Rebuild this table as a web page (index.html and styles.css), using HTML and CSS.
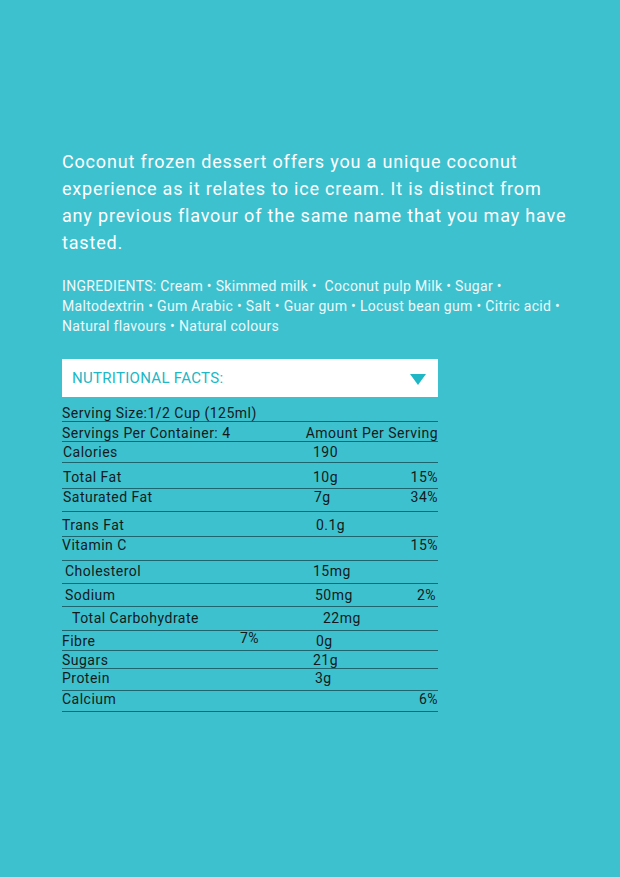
FILE: index.html
```html
<!DOCTYPE html>
<html lang="en">
<head>
<meta charset="utf-8">
<title>Coconut frozen dessert</title>
<link rel="stylesheet" href="styles.css">
</head>
<body>
<main class="page">
  <p class="intro">Coconut frozen dessert offers you a unique coconut experience as it relates to ice cream. It is distinct from any previous flavour of the same name that you may have tasted.</p>
  <p class="ingredients">INGREDIENTS: Cream • Skimmed milk • &nbsp;Coconut pulp Milk • Sugar • Maltodextrin • Gum Arabic • Salt • Guar gum • Locust bean gum • Citric acid • Natural flavours • Natural colours</p>

  <div class="facts-head">
    <span class="facts-title">NUTRITIONAL FACTS:</span>
    <svg class="facts-caret" width="16" height="11" viewBox="0 0 16 11" aria-hidden="true"><polygon points="0,0 16,0 8,11" fill="#1fb7c6"/></svg>
  </div>

  <div class="facts">
    <div class="row"><span class="lbl">Serving Size:1/2 Cup (125ml)</span></div>
    <div class="row"><span class="lbl">Servings Per Container: 4</span><span class="pct">Amount Per Serving</span></div>
    <div class="row"><span class="lbl ind1">Calories</span><span class="amt">190</span></div>
    <div class="row"><span class="lbl ind1">Total Fat</span><span class="amt">10g</span><span class="pct">15%</span></div>
    <div class="row"><span class="lbl ind1">Saturated Fat</span><span class="amt off1">7g</span><span class="pct">34%</span></div>
    <div class="row"><span class="lbl">Trans Fat</span><span class="amt off3">0.1g</span></div>
    <div class="row"><span class="lbl">Vitamin C</span><span class="pct">15%</span></div>
    <div class="row"><span class="lbl ind3">Cholesterol</span><span class="amt">15mg</span></div>
    <div class="row"><span class="lbl ind3">Sodium</span><span class="amt off2">50mg</span><span class="pct pct-in">2%</span></div>
    <div class="row"><span class="lbl ind10">Total Carbohydrate</span><span class="amt off10">22mg</span></div>
    <div class="row"><span class="lbl">Fibre</span><span class="note">7%</span><span class="amt off3">0g</span></div>
    <div class="row"><span class="lbl">Sugars</span><span class="amt">21g</span></div>
    <div class="row"><span class="lbl">Protein</span><span class="amt off2">3g</span></div>
    <div class="row"><span class="lbl">Calcium</span><span class="pct">6%</span></div>
  </div>
</main>
</body>
</html>
```

FILE: styles.css
```css
html, body {
  margin: 0;
  padding: 0;
}

body {
  background: #3dc1cf;
  font-family: Roboto, "Liberation Sans", Arial, sans-serif;
  min-height: 877px;
}

.page {
  padding: 148px 0 0 62px;
  width: 508px;
}

.intro {
  margin: 0;
  color: #ffffff;
  font-size: 18px;
  line-height: 27px;
  letter-spacing: 0.82px;
}

.ingredients {
  margin: 20px 0 0;
  color: #eef9fb;
  font-size: 14px;
  line-height: 20px;
  letter-spacing: 0.33px;
}

.facts-head {
  margin-top: 23px;
  width: 376px;
  height: 38px;
  box-sizing: border-box;
  background: #ffffff;
  display: flex;
  align-items: center;
  justify-content: space-between;
  padding: 0 12px 0 10px;
}

.facts-title {
  color: #20b7c6;
  font-size: 15px;
  line-height: 18px;
  letter-spacing: 0.3px;
}

.facts-caret {
  display: block;
  margin-top: 2px;
}

.facts {
  margin-top: 8px;
  width: 376px;
  color: #141a1b;
  font-size: 14px;
  line-height: 16px;
  letter-spacing: 0.48px;
}

.row {
  display: grid;
  grid-template-columns: 251px 1fr auto;
  box-sizing: border-box;
  border-bottom: 1px solid #1d6670;
  white-space: nowrap;
}

.lbl { grid-column: 1; grid-row: 1; }
.amt { grid-column: 2; grid-row: 1; }
.pct { grid-column: 2 / 4; grid-row: 1; justify-self: end; }
.pct-in { margin-right: 2px; }

.note {
  grid-column: 1;
  grid-row: 1;
  justify-self: start;
  margin: -3px 0 0 178px;
}

.ind1 { padding-left: 1px; }
.ind3 { padding-left: 3px; }
.ind10 { padding-left: 10px; }

.off1 { padding-left: 1px; }
.off2 { padding-left: 2px; }
.off3 { padding-left: 3px; }
.off10 { padding-left: 10px; }

.row:nth-child(1)  { height: 17px; padding-top: 0; }
.row:nth-child(2)  { height: 20px; padding-top: 3px; }
.row:nth-child(3)  { height: 21px; padding-top: 2px; }
.row:nth-child(4)  { height: 26px; padding-top: 6px; }
.row:nth-child(5)  { height: 23px; padding-top: 0; }
.row:nth-child(6)  { height: 25px; padding-top: 5px; }
.row:nth-child(7)  { height: 24px; padding-top: 0; }
.row:nth-child(8)  { height: 23px; padding-top: 2px; }
.row:nth-child(9)  { height: 23px; padding-top: 3px; }
.row:nth-child(10) { height: 24px; padding-top: 3px; }
.row:nth-child(11) { height: 20px; padding-top: 2px; }
.row:nth-child(12) { height: 18px; padding-top: 1px; }
.row:nth-child(13) { height: 22px; padding-top: 1px; }
.row:nth-child(14) { height: 21px; padding-top: 0; }
```
